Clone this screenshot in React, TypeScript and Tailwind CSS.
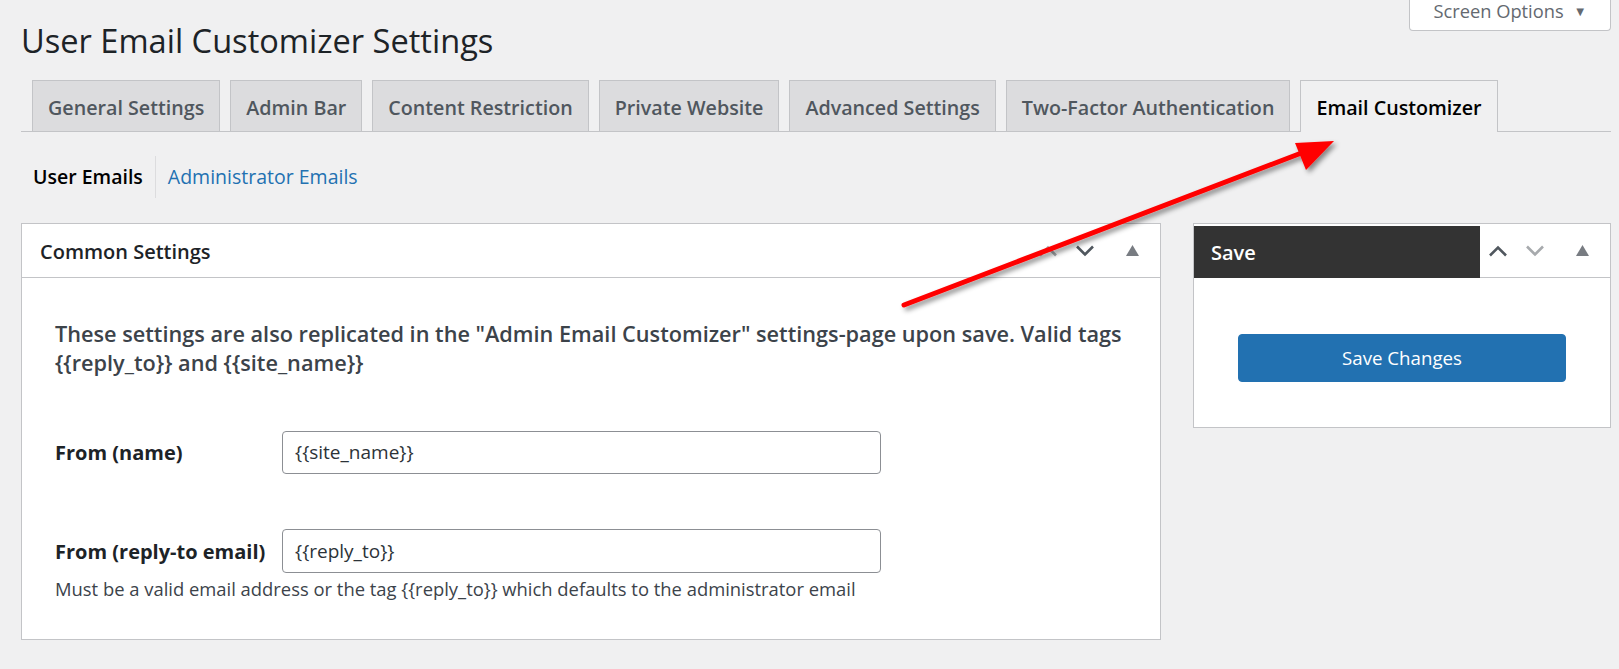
import React from 'react'

const tabs = [
  'General Settings',
  'Admin Bar',
  'Content Restriction',
  'Private Website',
  'Advanced Settings',
  'Two-Factor Authentication',
]

function ChevronUp({className}: {className: string}) {
  return (
    <svg width="20" height="12" viewBox="0 0 20 12" className={className}>
      <path d="M2 10.5 L10 2.5 L18 10.5" fill="none" stroke="currentColor" strokeWidth="2.6" />
    </svg>
  )
}

function ChevronDown({className}: {className: string}) {
  return (
    <svg width="20" height="12" viewBox="0 0 20 12" className={className}>
      <path d="M2 1.5 L10 9.5 L18 1.5" fill="none" stroke="currentColor" strokeWidth="2.6" />
    </svg>
  )
}

function Triangle({className}: {className: string}) {
  return (
    <svg width="13" height="11" viewBox="0 0 13 11" className={className}>
      <path d="M6.5 0 L13 11 L0 11 Z" fill="currentColor" />
    </svg>
  )
}

function HandleIcons({upClass, downClass}: {upClass: string; downClass: string}) {
  return (
    <div className="flex items-center pr-[21px]">
      <ChevronUp className={upClass} />
      <ChevronDown className={`ml-[17px] ${downClass}`} />
      <Triangle className="ml-[31px] text-[#787c82]" />
    </div>
  )
}

export default function App() {
  return (
    <div className="relative min-h-[669px] overflow-hidden bg-[#f0f0f1] pl-[21px] pr-[8px] font-['Open_Sans',sans-serif] text-[#3c434a]">
      {/* screen options */}
      <div className="absolute right-[8px] top-0 flex h-[31px] w-[202px] items-center justify-center rounded-b-[4px] border border-t-0 border-[#c3c4c7] bg-white pb-[8px] text-[18.3px] leading-[22px] text-[#646970]">
        Screen Options
        <span className="ml-[10px] text-[13px] leading-[22px]">▼</span>
      </div>

      <h1 className="pt-[21px] text-[32.6px] leading-[40px] font-normal text-[#1d2327]">
        User Email Customizer Settings
      </h1>

      {/* tabs */}
      <div className="mt-[19px] flex gap-[10px] border-b border-[#c3c4c7] pl-[11px]">
        {tabs.map((t) => (
          <div
            key={t}
            className="flex h-[51px] items-center border border-b-0 border-[#c3c4c7] bg-[#dcdcde] px-[15px] pt-[3px] text-[19.7px] font-semibold text-[#50575e]"
          >
            {t}
          </div>
        ))}
        <div className="-mb-px flex h-[52px] items-center border border-b-0 border-[#c3c4c7] bg-[#f0f0f1] px-[15px] pt-[3px] text-[19.7px] font-semibold text-black">
          Email Customizer
        </div>
      </div>

      {/* sub nav */}
      <div className="mt-[24px] flex h-[42px] items-center pl-[12px] text-[19.5px]">
        <span className="font-semibold text-black">User Emails</span>
        <span className="mx-[12px] h-[42px] w-px bg-[#dcdcde]" />
        <span className="text-[#2271b1]">Administrator Emails</span>
      </div>

      <div className="mt-[25px] flex gap-[32px]">
        {/* common settings */}
        <div className="h-[417px] w-[1140px] border border-[#c3c4c7] bg-white">
          <div className="flex h-[54px] items-center justify-between border-b border-[#c3c4c7]">
            <h2 className="pl-[18px] pt-[3px] text-[20px] font-semibold text-[#1d2327]">Common Settings</h2>
            <HandleIcons upClass="text-[#a7aaad]" downClass="text-[#50575e]" />
          </div>
          <div className="px-[33px] pt-[41px]">
            <p className="text-[21.7px] leading-[29px] font-semibold text-[#3c434a]">
              These settings are also replicated in the "Admin Email Customizer" settings-page upon save. Valid tags
              <br />
              {'{{reply_to}} and {{site_name}}'}
            </p>

            <div className="mt-[54px] flex items-center">
              <label className="w-[227px] text-[20px] font-bold text-[#1d2327]">From (name)</label>
              <div className="flex h-[43px] w-[599px] items-center rounded-[4px] border border-[#8c8f94] px-[12px] text-[19px] text-[#2c3338]">
                {'{{site_name}}'}
              </div>
            </div>

            <div className="mt-[55px] flex items-center">
              <label className="w-[227px] pt-[2px] text-[20px] font-bold text-[#1d2327]">From (reply-to email)</label>
              <div className="flex h-[44px] w-[599px] items-center rounded-[4px] border border-[#8c8f94] px-[12px] text-[19px] text-[#2c3338]">
                {'{{reply_to}}'}
              </div>
            </div>
            <p className="mt-[4px] text-[18.4px] leading-[24px] text-[#3c434a]">
              Must be a valid email address or the tag {'{{reply_to}}'} which defaults to the administrator email
            </p>
          </div>
        </div>

        {/* save box */}
        <div className="h-[205px] w-[418px] border border-[#c3c4c7] bg-white">
          <div className="flex h-[54px] items-center justify-between border-b border-[#c3c4c7]">
            <div className="mt-[2px] flex h-[52px] w-[286px] items-center bg-[#333333] pl-[17px] pt-[2px] text-[20px] font-semibold text-white">
              Save
            </div>
            <HandleIcons upClass="text-[#50575e]" downClass="text-[#a7aaad]" />
          </div>
          <div className="px-[44px] pt-[56px]">
            <button className="h-[48px] w-full rounded-[4px] border border-[#2271b1] bg-[#2271b1] text-[18.7px] text-white">
              Save Changes
            </button>
          </div>
        </div>
      </div>

      {/* annotation arrow */}
      <svg className="pointer-events-none absolute left-0 top-0" width="1619" height="669">
        <defs>
          <filter id="shadow" x="-10%" y="-10%" width="120%" height="120%">
            <feDropShadow dx="3" dy="3" stdDeviation="2.5" floodColor="#000" floodOpacity="0.45" />
          </filter>
        </defs>
        <g filter="url(#shadow)">
          <line x1="904" y1="305" x2="1304" y2="152" stroke="#ff0000" strokeWidth="5" strokeLinecap="round" />
          <path d="M1334 141 L1295 143 L1306 170 Z" fill="#ff0000" />
        </g>
      </svg>
    </div>
  )
}
